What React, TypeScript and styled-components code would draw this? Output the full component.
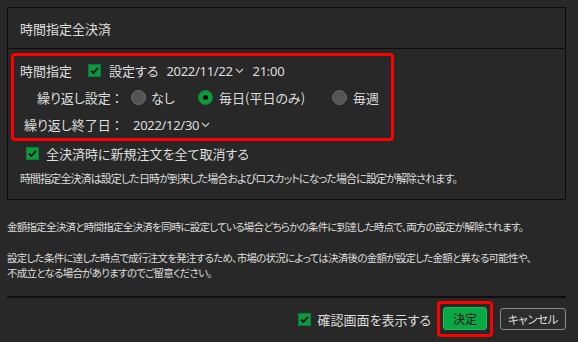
import React from 'react';
import styled, { createGlobalStyle } from 'styled-components';

const GlobalStyle = createGlobalStyle`
  body {
    margin: 0;
    background: #282828;
    color: #dedede;
    font-family: "Noto Sans CJK JP", "Noto Sans", sans-serif;
    font-feature-settings: "palt";
  }
`;

const Page = styled.div`
  width: 578px;
  height: 342px;
  box-sizing: border-box;
  padding: 7px 12px 0 7px;
  display: flex;
  flex-direction: column;
`;

const Panel = styled.div`
  width: 559px;
  height: 193px;
  box-sizing: border-box;
  border: 1px solid #0c0c0c;
  display: flex;
  flex-direction: column;
`;

const PanelHeader = styled.div`
  height: 40px;
  flex-shrink: 0;
  display: flex;
  align-items: center;
  padding-left: 12px;
  font-size: 13px;
  border-bottom: 1px solid #0c0c0c;
`;

const PanelBody = styled.div`
  padding: 4px 0 0 3px;
  display: flex;
  flex-direction: column;
`;

const RedBox = styled.div`
  width: 383px;
  height: 88px;
  box-sizing: border-box;
  border: 3px solid #ff0000;
  border-radius: 4px;
  padding-top: 1px;
  display: flex;
  flex-direction: column;
`;

const Row = styled.div<{ $indent: number; $h?: number }>`
  height: ${p => p.$h ?? 27}px;
  display: flex;
  align-items: center;
  padding-left: ${p => p.$indent}px;
  font-size: 13px;
  white-space: nowrap;
`;

const Label = styled.span<{ $w: number }>`
  width: ${p => p.$w}px;
  flex-shrink: 0;
`;

const Gap = styled.span<{ $w: number }>`
  display: inline-block;
  width: ${p => p.$w}px;
  flex-shrink: 0;
`;

const Box = styled.span`
  width: 13px;
  height: 13px;
  box-sizing: border-box;
  background: #0a9b3e;
  border: 1px solid #0d7a35;
  display: inline-flex;
  align-items: center;
  justify-content: center;
  flex-shrink: 0;
`;

const Radio = styled.span<{ $on?: boolean }>`
  width: 15px;
  height: 15px;
  box-sizing: border-box;
  border-radius: 50%;
  background: ${p => (p.$on ? '#0a9b3e' : '#555555')};
  border: 1px solid ${p => (p.$on ? '#0c8a38' : '#6a6a6a')};
  display: inline-flex;
  align-items: center;
  justify-content: center;
  flex-shrink: 0;
  &::after {
    content: '';
    display: ${p => (p.$on ? 'block' : 'none')};
    width: 5px;
    height: 5px;
    border-radius: 50%;
    background: #0a0a0a;
  }
`;

const Num = styled.span`
  font-family: "Noto Sans", sans-serif;
  font-size: 13px;
  letter-spacing: -0.3px;
`;

const Note = styled.div<{ $top?: number; $small?: boolean }>`
  font-size: ${p => (p.$small ? 10.5 : 11)}px;
  line-height: 15px;
  letter-spacing: ${p => (p.$small ? -0.75 : -0.9)}px;
  margin-top: ${p => p.$top ?? 0}px;
  white-space: nowrap;
`;

const Info = styled.div`
  padding-top: 19px;
  display: flex;
  flex-direction: column;
`;

const Divider = styled.div`
  margin-top: 16px;
  width: 559px;
  height: 2px;
  background: #0e0e0e;
`;

const Footer = styled.div`
  display: flex;
  align-items: center;
  justify-content: flex-end;
  height: 42px;
  font-size: 13px;
`;

const Highlight = styled.div`
  border: 3px solid #ff0000;
  border-radius: 4px;
  padding: 3px 3px 4px;
  margin-left: 6px;
`;

const OkButton = styled.button`
  width: 44px;
  height: 23px;
  box-sizing: border-box;
  background: #09a845;
  border: 1px solid #1dbd58;
  border-radius: 3px;
  color: #111;
  font-family: inherit;
  font-size: 12px;
  padding: 0;
  display: flex;
  align-items: center;
  justify-content: center;
`;

const CancelButton = styled.button`
  margin-left: 7px;
  width: 66px;
  height: 22px;
  box-sizing: border-box;
  background: #2c2c2c;
  border: 1px solid #8a8a8a;
  border-radius: 3px;
  color: #dedede;
  font-family: inherit;
  font-feature-settings: "palt";
  font-size: 11.5px;
  letter-spacing: -0.4px;
  padding: 0;
`;

const Check = () => (
  <Box>
    <svg width="11" height="11" viewBox="0 0 11 11">
      <path d="M2 5.6 L4.4 8 L9 2.8" fill="none" stroke="#0b0b0b" strokeWidth="1.8" />
    </svg>
  </Box>
);

const Chevron = () => (
  <svg width="9" height="6" viewBox="0 0 9 6" style={{ marginLeft: 2 }}>
    <path d="M1 1 L4.5 4.5 L8 1" fill="none" stroke="#cfcfcf" strokeWidth="1.1" />
  </svg>
);

export default function App() {
  return (
    <>
      <GlobalStyle />
      <Page>
        <Panel>
          <PanelHeader>時間指定全決済</PanelHeader>
          <PanelBody>
            <RedBox>
              <Row $indent={6}>
                <Label $w={68}>時間指定</Label>
                <Check />
                <Gap $w={8} />
                <span>設定する</span>
                <Gap $w={8} />
                <Num>2022/11/22</Num>
                <Chevron />
                <Gap $w={9} />
                <Num>21:00</Num>
              </Row>
              <Row $indent={23}>
                <Label $w={94}>繰り返し設定 ：</Label>
                <Radio />
                <Gap $w={5} />
                <Label $w={47}>なし</Label>
                <Radio $on />
                <Gap $w={6} />
                <Label $w={113}>毎日(平日のみ)</Label>
                <Radio />
                <Gap $w={6} />
                <span>毎週</span>
              </Row>
              <Row $indent={10}>
                <Label $w={109}>繰り返し終了日 ：</Label>
                <Num>2022/12/30</Num>
                <Chevron />
              </Row>
            </RedBox>
            <Row $indent={15} $h={25}>
              <Check />
              <Gap $w={7} />
              <span>全決済時に新規注文を全て取消する</span>
            </Row>
            <Row $indent={9} $h={24}>
              <Note>時間指定全決済は設定した日時が到来した場合およびロスカットになった場合に設定が解除されます。</Note>
            </Row>
          </PanelBody>
        </Panel>
        <Info>
          <Note $small>金額指定全決済と時間指定全決済を同時に設定している場合どちらかの条件に到達した時点で、両方の設定が解除されます。</Note>
          <Note $small $top={16}>設定した条件に達した時点で成行注文を発注するため、市場の状況によっては決済後の金額が設定した金額と異なる可能性や、</Note>
          <Note $small>不成立となる場合がありますのでご留意ください。</Note>
        </Info>
        <Divider />
        <Footer>
          <Check />
          <Gap $w={7} />
          <span>確認画面を表示する</span>
          <Highlight>
            <OkButton>決定</OkButton>
          </Highlight>
          <CancelButton>キャンセル</CancelButton>
        </Footer>
      </Page>
    </>
  );
}
